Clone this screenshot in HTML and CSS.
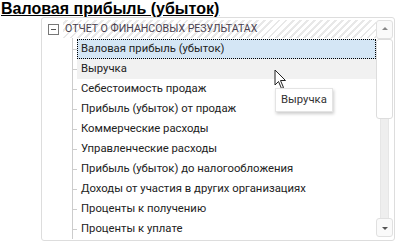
FILE: index.html
```html
<!DOCTYPE html>
<html>
<head>
    <meta charset="utf-8">
    <title>Валовая прибыль (убыток)</title>
    <link rel="stylesheet" href="styles.css">
</head>
<body>

<h1 class="page-title">Валовая прибыль (убыток)</h1>

<div class="tree-box">
    <div class="tree-view">
        <div class="tree-root">
            <span class="expander"></span>
            <span class="root-text">ОТЧЕТ О ФИНАНСОВЫХ РЕЗУЛЬТАТАХ</span>
        </div>
        <ul class="tree-items">
            <li class="item selected"><span>Валовая прибыль (убыток)</span></li>
            <li class="item hover"><span>Выручка</span></li>
            <li class="item"><span>Себестоимость продаж</span></li>
            <li class="item"><span>Прибыль (убыток) от продаж</span></li>
            <li class="item"><span>Коммерческие расходы</span></li>
            <li class="item"><span>Управленческие расходы</span></li>
            <li class="item"><span>Прибыль (убыток) до налогообложения</span></li>
            <li class="item"><span>Доходы от участия в других организациях</span></li>
            <li class="item"><span>Проценты к получению</span></li>
            <li class="item"><span>Проценты к уплате</span></li>
        </ul>
    </div>
    <div class="scrollbar">
        <div class="scroll-btn up"></div>
        <div class="scroll-thumb"></div>
        <div class="scroll-track"></div>
        <div class="scroll-btn down"></div>
    </div>

    <!-- курсор и подсказка над строкой "Выручка" -->
    <svg class="cursor" width="14" height="22" viewBox="0 0 14 22">
        <path d="M1 1 L1 16 L4.5 12.5 L7.5 19.5 L9.5 18.5 L6.5 11.5 L11.5 11.5 Z" fill="#fff" stroke="#222" stroke-width="1"/>
    </svg>
    <div class="tooltip">Выручка</div>
</div>

</body>
</html>
```

FILE: styles.css
```css
body {
    margin: 0;
    font-family: Roboto, "Open Sans", sans-serif;
    background-color: #FFF;
    color: #333;
}

.page-title {
    margin: 0 0 -1px;
    padding-left: 1px;
    font-family: "Liberation Sans", Arial, sans-serif;
    font-size: 16px;
    font-weight: bold;
    line-height: 18px;
    color: #000;
    text-decoration: underline;
}

.tree-box {
    position: relative;
    display: flex;
    margin-left: 41px;
    width: 352px;
    height: 222px;
    border: 1px solid #DDD;
    border-radius: 3px;
    overflow: hidden;
}

.tree-view {
    flex: 1;
    padding: 2px 0 0 6px;
}

.tree-root {
    display: flex;
    align-items: center;
    height: 18px;
}

.expander {
    position: relative;
    width: 9px;
    height: 9px;
    border: 1px solid #777;
    margin-right: 4px;
    flex-shrink: 0;
}

.expander::after {
    content: "";
    position: absolute;
    left: 2px;
    top: 4px;
    width: 5px;
    height: 1px;
    background: #555;
}

.root-text {
    flex: 1;
    height: 18px;
    line-height: 18px;
    padding-left: 2px;
    font-size: 10.6px;
    color: #4A3F4F;
    background: repeating-linear-gradient(-45deg, #E8E8E8 0, #E8E8E8 2px, #FFF 2px, #FFF 5px);
}

.tree-items {
    list-style: none;
    margin: 0 0 0 24px;
    padding: 1px 0 0;
    border-left: 1px solid #CCC;
}

.item {
    position: relative;
    height: 20px;
    padding-left: 4px;
}

.item::before {
    content: "";
    position: absolute;
    left: 0;
    top: 10px;
    width: 4px;
    height: 1px;
    background: #CCC;
}

.item span {
    display: block;
    height: 18px;
    padding-left: 3px;
    font-size: 11.3px;
    line-height: 18px;
    color: #222;
    border: 1px dotted transparent;
}

.item.selected span {
    background: #D4E6F5;
    border-color: #000;
}

.item.hover span {
    background: #F1F1F1;
}

.scrollbar {
    display: flex;
    flex-direction: column;
    width: 17px;
    padding: 2px 1px 3px 0;
}

.scroll-btn {
    position: relative;
    height: 17px;
    border: 1px solid #E0E0E0;
    border-radius: 3px;
    background: #FAFAFA;
}

.scroll-btn::after {
    content: "";
    position: absolute;
    left: 5px;
    border-left: 3px solid transparent;
    border-right: 3px solid transparent;
}

.scroll-btn.up::after {
    top: 6px;
    border-bottom: 3px solid #888;
}

.scroll-btn.down::after {
    top: 8px;
    border-top: 3px solid #555;
}

.scroll-thumb {
    height: 78px;
    border: 1px solid #DDD;
    border-radius: 3px;
    background: #FFF;
}

.scroll-track {
    flex: 1;
    margin: 0 4px;
    border-left: 1px solid #E6E6E6;
    border-right: 1px solid #E6E6E6;
    background: #EEE;
}

.cursor {
    position: absolute;
    left: 232px;
    top: 51px;
}

.tooltip {
    position: absolute;
    left: 233px;
    top: 70px;
    padding: 2px 5px;
    font-size: 11.3px;
    line-height: 18px;
    color: #333;
    background: #FFF;
    border: 1px solid #E4E4E4;
    box-shadow: 1px 2px 3px rgba(0, 0, 0, 0.2);
}
```
